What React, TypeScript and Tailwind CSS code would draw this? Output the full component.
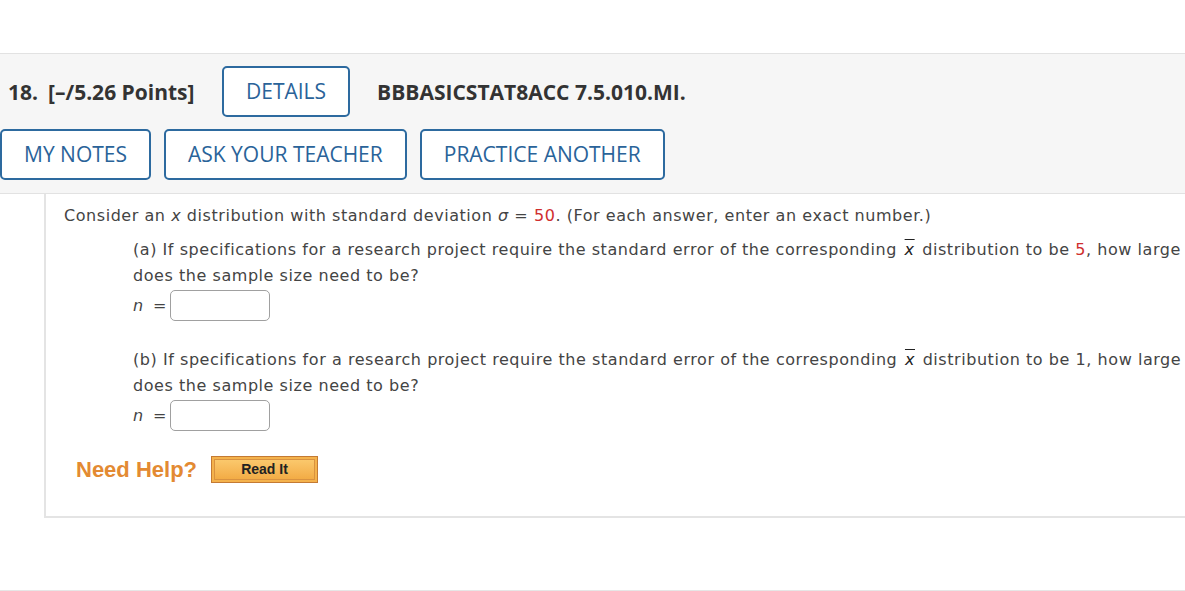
import React from 'react';

const sans = "font-['Open_Sans',_'Liberation_Sans',_sans-serif]";
const verdana = "font-['DejaVu_Sans',_'Liberation_Sans',_sans-serif]";

function OutlineButton({ label }: { label: string }) {
  return (
    <button className={`h-[51px] px-[22px] border-2 border-[#2d6a9f] rounded-[5px] bg-white text-[#2a6399] text-[21px] font-medium ${sans}`}>
      {label}
    </button>
  );
}

function Answer() {
  return (
    <div className="flex items-center mt-px">
      <span className="italic w-[20px]">n</span>
      <span className="w-[17px]">=</span>
      <input className="w-[100px] h-[31px] border border-[#a0a0a0] rounded-[5px] bg-white outline-none" />
    </div>
  );
}

function Part({ letter, value, red }: { letter: string; value: string; red?: boolean }) {
  return (
    <div>
      <div className="whitespace-nowrap leading-[26px]">
        ({letter}) If specifications for a research project require the standard error of the corresponding{' '}
        <span className="italic overline text-[#222] px-[2px]">x</span> distribution to be{' '}
        <span className={red ? 'text-[#cf2e2e]' : ''}>{value}</span>, how large
      </div>
      <div className="leading-[26px]">does the sample size need to be?</div>
      <Answer />
    </div>
  );
}

export default function App() {
  return (
    <div className="w-[1185px] h-[591px] overflow-hidden bg-white">
      <div className="h-[53px]" />

      {/* question header */}
      <div className="border-t border-b border-[#e2e2e2] bg-[#f6f6f6] pt-3 pb-[13px]">
        <div className={`flex items-center h-[51px] text-[#333] font-bold text-[21px] ${sans}`}>
          <span className="ml-2 mt-[3px] w-[40px]">18.</span>
          <span className="mt-[3px] w-[174px]">[–/5.26 Points]</span>
          <OutlineButton label="DETAILS" />
          <span className="mt-[3px] ml-[27px]">BBBASICSTAT8ACC 7.5.010.MI.</span>
        </div>
        <div className="flex gap-[13px] mt-3">
          <OutlineButton label="MY NOTES" />
          <OutlineButton label="ASK YOUR TEACHER" />
          <OutlineButton label="PRACTICE ANOTHER" />
        </div>
      </div>

      {/* question body */}
      <div className={`ml-[44px] border-l-2 border-b-2 border-[#e4e4e4] pl-[18px] pt-[9px] pb-[33px] text-[16px] tracking-[0.55px] text-[#444] ${verdana}`}>
        <div className="whitespace-nowrap leading-[26px]">
          Consider an <span className="italic">x</span> distribution with standard deviation{' '}
          <span className="italic">σ</span> = <span className="text-[#cf2e2e]">50</span>. (For each answer, enter an exact number.)
        </div>
        <div className="ml-[69px] mt-2">
          <Part letter="a" value="5" red />
          <div className="mt-[26px]">
            <Part letter="b" value="1" />
          </div>
        </div>
        <div className="flex items-center mt-[25px] ml-3 h-[27px] tracking-normal">
          <span className="font-['Liberation_Sans',_Arial,_sans-serif] font-bold text-[22px] text-[#e38a32] mr-[14px]">Need Help?</span>
          <button className="h-[27px] w-[107px] border border-[#c47a33] bg-[#f4b24c] p-[2px]">
            <span className="flex items-center justify-center h-full border border-[#d99240] bg-gradient-to-b from-[#fbc86c] to-[#f2ac45] font-['Liberation_Sans',_Arial,_sans-serif] font-bold text-[14px] text-[#222]">
              Read It
            </span>
          </button>
        </div>
      </div>

      <div className="h-[74px] border-b-2 border-[#e6e6e6]" />
    </div>
  );
}
